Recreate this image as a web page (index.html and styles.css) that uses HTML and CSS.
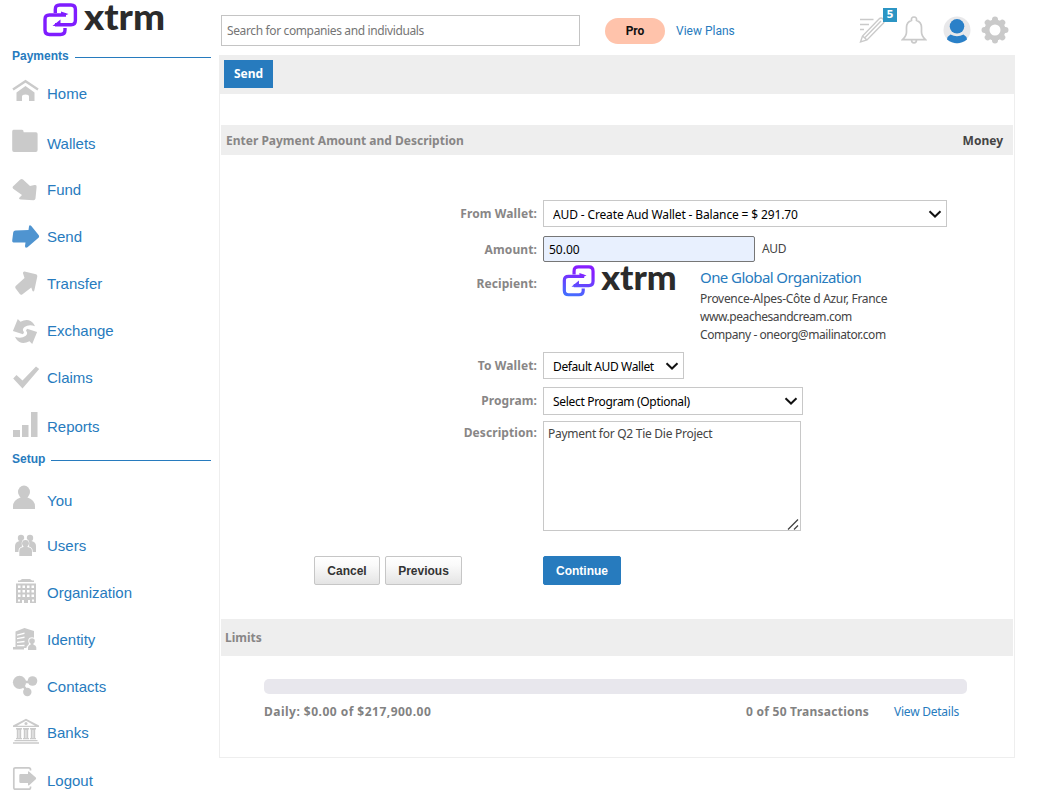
FILE: index.html
```html
<!DOCTYPE html>
<html lang="en">
<head>
    <meta charset="UTF-8">
    <title>XTRM - Send Payment</title>
    <link rel="stylesheet" href="styles.css">
</head>
<body>
    <div class="page">
        <aside class="sidebar">
            <a class="logo" href="#">
                <svg width="124" height="36" viewBox="0 0 124 36">
                    <g class="logo-mark" stroke="#7f1dff">
                        <path d="M12.3 10V6.5Q12.3 2 16.8 2H28Q32.4 2 32.4 6.5V17.3Q32.4 21.8 28 21.8H12"/>
                        <path d="M23 12H6.5Q2 12 2 16.5V27Q2 31.5 6.5 31.5H17.5Q22 31.5 22 27V25"/>
                    </g>
                    <path fill="#7f1dff" d="M9.5 23L17.5 16.5V23ZM25.5 11L18 8.5V13H21Z"/>
                    <text class="logo-text" x="41" y="26.5" textLength="81" lengthAdjust="spacingAndGlyphs">xtrm</text>
                </svg>
            </a>

            <div class="menu-title">Payments</div>
            <ul class="menu">
                <li>
                    <svg viewBox="0 0 28 34"><path class="line" stroke-width="2.4" d="M1 12.5L13.5 4.2L26 12.5"/><path d="M4.5 15.5L13.5 9L22.5 15.5V24H17V19.5Q17 17.5 13.5 17.5Q10 17.5 10 19.5V24H4.5Z"/></svg>
                    <a href="#">Home</a>
                </li>
                <li class="down-3">
                    <svg viewBox="0 0 28 34"><path d="M1.5 2.8H10Q11.5 2.8 11.7 5.2H24Q25.6 5.2 25.6 7V23Q25.6 25 23.8 25H2Q.2 25 .2 23V4.5Q.2 2.8 1.5 2.8Z"/></svg>
                    <a href="#">Wallets</a>
                </li>
                <li class="up-1">
                    <svg viewBox="0 0 28 34"><path d="M.9 13.5L8 6.8Q9.5 5.5 11 6.5L18 13L22.5 12Q25 11.5 24.6 14L23.5 25.5Q23.2 27.2 21.5 27.2L9 26.6Q6 26.2 7.5 24.5L10 22L1.2 15.7Q0 14.5 .9 13.5Z"/></svg>
                    <a href="#">Fund</a>
                </li>
                <li>
                    <svg class="active" viewBox="0 0 28 34"><path d="M3.5 10.6L16.5 10L17 6.5Q17.5 4.5 19.3 6L26.8 15.3Q27.5 16.5 26.8 17.5L15.5 27.2Q13 28.5 13 26L13.5 22.6H1.5Q0 22.5 .2 20.5L1.2 12.5Q1.5 10.7 3.5 10.6Z"/></svg>
                    <a href="#">Send</a>
                </li>
                <li>
                    <svg viewBox="0 0 28 34"><path d="M12.5 4.6L24 7.3Q25.5 7.8 25.3 9.5L22.3 23.5Q21.5 25 20.5 24L19.3 20.5L10.5 27.2Q9 28.3 7.8 27L3.5 21.2Q2.8 20 3.7 19L12.5 11L11 6.2Q10.8 4.5 12.5 4.6Z"/></svg>
                    <a href="#">Transfer</a>
                </li>
                <li>
                    <svg viewBox="0 0 28 34"><path d="M.9 17L5.8 5L8.5 7.7Q17 3.5 21.8 10L23 12.3Q17 10 12.5 13Q9.5 15.5 12 18.2L11 20.3Z"/><path transform="rotate(180 13 17.5)" d="M.9 17L5.8 5L8.5 7.7Q17 3.5 21.8 10L23 12.3Q17 10 12.5 13Q9.5 15.5 12 18.2L11 20.3Z"/></svg>
                    <a href="#">Exchange</a>
                </li>
                <li>
                    <svg viewBox="0 0 28 34"><path d="M1.2 17.5L4.5 14L10.5 19.5L24 5.5L27.2 8L10.5 27.5Z"/></svg>
                    <a href="#">Claims</a>
                </li>
                <li class="down-2">
                    <svg viewBox="0 0 28 34"><path d="M1 20H8V27H1ZM10 15H16.5V27H10ZM19 2H25.5V27H19Z"/></svg>
                    <a href="#">Reports</a>
                </li>
            </ul>

            <div class="menu-title setup">Setup</div>
            <ul class="menu">
                <li>
                    <svg viewBox="0 0 28 34"><ellipse cx="12" cy="8" rx="6" ry="6.5"/><path d="M8.5 11H15.5V13.5Q23 16 23 22.5V25H1V22.5Q1 16 8.5 13.5Z"/></svg>
                    <a href="#">You</a>
                </li>
                <li class="up-2">
                    <svg viewBox="0 0 28 34"><circle cx="9" cy="9" r="3.2"/><circle cx="18" cy="9" r="3.2"/><path d="M3 23V17Q3 13 7.5 12H19.5Q24 13 24 17V23Z"/><path class="cut" d="M6.5 27.5V22Q6.500 18.500 10 17.500Q8.500 10 13.500 10Q18.500 10 17 17.500Q20.700 18.500 20.700 22V27.500Z"/><circle cx="13.5" cy="14.3" r="3.4"/><path d="M7.3 27V22Q7.300 18.500 11.500 18V16H15.500V18Q20 18.500 20 22V27Z"/></svg>
                    <a href="#">Users</a>
                </li>
                <li>
                    <svg viewBox="0 0 28 34"><path d="M10 3H18L20 4.5H22V6H6V4.5H8ZM4 7.5H24V27H18V24H16V27H12V24H10V27H4Z"/><path class="cut" d="M6 9.5h2.500v2.500h-2.500zM10.500 9.500h2.500v2.500h-2.500zM15 9.500h2.500v2.500h-2.500zM19.500 9.500h2.500v2.500h-2.500zM6 14h2.500v2.500h-2.500zM10.500 14h2.500v2.500h-2.500zM15 14h2.500v2.500h-2.500zM19.500 14h2.500v2.500h-2.500zM6 18.500h2.500v2.500h-2.500zM10.500 18.500h2.500v2.500h-2.500zM15 18.500h2.500v2.500h-2.500zM19.500 18.500h2.500v2.500h-2.500zM6 23.500h2v2h-2zM20 23.500h2v2h-2z"/></svg>
                    <a href="#">Organization</a>
                </li>
                <li>
                    <svg viewBox="0 0 28 34"><path d="M3.5 8.5L12.5 5L22 8V25H12V26.5H1V24H3.5Z"/><path class="cut" d="M5 11.5L12.5 9.5V11L5 12.7ZM5 15L12.5 13.5V15L5 16.3ZM5 18.7L12.5 17.7V19.3L5 20ZM5 22.3L12.5 21.7V23.3H5Z"/><path class="cut" d="M14.5 28V24Q16 22 17 21Q14.5 14.5 20 14.2Q25 14.5 23 21Q25 22 25 28Z"/><circle cx="20" cy="18" r="2.8"/><path d="M18.7 19H21.3V21.5Q24.3 22.5 24.3 24.5V27H16V24.5Q16 22.5 18.7 21.5Z"/></svg>
                    <a href="#">Identity</a>
                </li>
                <li>
                    <svg viewBox="0 0 28 34"><circle cx="7.5" cy="12.3" r="6.6"/><circle cx="20.5" cy="11" r="4.8"/><circle cx="15.3" cy="22" r="4.2"/><path class="line" stroke-width="2.5" d="M8 12H20M10 14L15 21"/></svg>
                    <a href="#">Contacts</a>
                </li>
                <li class="up-1">
                    <svg viewBox="0 0 28 34"><path fill-rule="evenodd" d="M14 2.8L27 9.5V11H1V9.5ZM14 4.8L5 9.7H23Z"/><circle cx="14" cy="7.5" r="1.5"/><path d="M4 12h6v1.5H4zM11 12h6v1.5h-6zM18 12h6v1.5h-6zM4.8 13h4.400v9H4.800zM11.800 13h4.400v9h-4.400zM18.800 13h4.400v9h-4.400zM4 22h6v1.300H4zM11 22h6v1.300h-6zM18 22h6v1.300h-6zM2.500 24h23v1.300h-23zM1 26.300h26v1.500H1z"/><path class="cut" d="M6.600 14h.7v8h-.7zM13.600 14h.7v8h-.7zM20.600 14h.7v8h-.7z"/></svg>
                    <a href="#">Banks</a>
                </li>
                <li class="down-1">
                    <svg viewBox="0 0 28 34"><path class="line" stroke-width="1.7" d="M18.5 6.5V5.5Q18.5 3.8 16.8 3.8H3.5Q1.8 3.8 1.8 5.5V23.5Q1.8 25.2 3.5 25.2H16.8Q18.5 25.2 18.5 23.5V22.5"/><path d="M8.5 10H16V8Q16 6.8 17.2 7.7L23.8 13.5Q24.5 14.3 23.8 15.2L17.2 21.2Q16 22 16 20.8V19H8.5Q7.3 19 7.3 17.8V11.2Q7.3 10 8.5 10Z"/></svg>
                    <a href="#">Logout</a>
                </li>
            </ul>
        </aside>

        <main class="main">
            <header class="header">
                <input class="search" type="text" placeholder="Search for companies and individuals">
                <span class="plan">Pro</span>
                <a class="view-plans" href="#">View Plans</a>
                <div class="tools">
                    <a class="tasks" href="#">
                        <svg width="28" height="28" viewBox="0 0 28 28"><path class="line" stroke-width="1.4" d="M1 3.5H14.500M1 8.500H10M1 13.500H5"/><path class="line" stroke-width="1.400" d="M1.500 26L3.500 20L20 3Q22 1 24 3Q26 5 24.500 7L8 24ZM3.500 20L8 24M5.500 22L22 5"/></svg>
                        <span class="badge">5</span>
                    </a>
                    <svg class="bell" width="26" height="28" viewBox="0 0 26 28"><path class="line" stroke-width="1.7" d="M10.5 4.5Q10 1 13 1Q16 1 15.5 4.5Q20.5 6 20.5 11.5V16Q20.5 20 24.5 23.7H1.5Q5.5 20 5.5 16V11.5Q5.5 6 10.5 4.5ZM10.5 24Q10.5 26.8 13 26.8Q15.5 26.8 15.5 24"/></svg>
                    <svg class="avatar" width="28" height="28" viewBox="0 0 28 28"><circle cx="14" cy="14" r="13.5" fill="#e8e8ea"/><circle cx="14" cy="10.3" r="7.3" fill="#2a80c8"/><path fill="#2a80c8" d="M4 23.5Q4.5 20 7.5 18.5Q14 22 20.5 18.5Q23.5 20 24 23.5Q14 31 4 23.5Z"/></svg>
                    <svg class="gear" width="28" height="28" viewBox="0 0 28 28"><circle class="line" cx="14" cy="14" r="8" stroke-width="5"/><path class="line" stroke-width="6" stroke-linecap="round" d="M14 3.5V5M14 23V24.5M3.5 14H5M23 14H24.5M6.7 6.7L7.5 7.5M20.5 20.5L21.3 21.3M6.7 21.3L7.5 20.5M20.5 7.5L21.3 6.7"/></svg>
                </div>
            </header>

            <div class="panel">
                <div class="toolbar"><a class="tab" href="#">Send</a></div>

                <div class="section-title">
                    <span>Enter Payment Amount and Description</span>
                    <span class="money">Money</span>
                </div>

                <form class="form">
                    <div class="row row-from">
                        <label>From Wallet:</label>
                        <div class="select from-wallet">
                            <select><option>AUD - Create Aud Wallet - Balance = $ 291.70</option></select>
                            <svg class="chevron" viewBox="0 0 14 8"><path d="M1.5 1.3L7 6.5L12.5 1.3"/></svg>
                        </div>
                    </div>
                    <div class="row row-amount">
                        <label>Amount:</label>
                        <input class="amount" type="text" value="50.00">
                        <span class="currency">AUD</span>
                    </div>
                    <div class="row row-recipient">
                        <label>Recipient:</label>
                        <div class="recipient">
                            <svg class="recipient-logo" width="120" height="34" viewBox="0 0 124 36">
                                <defs>
                                    <linearGradient id="mark" gradientUnits="userSpaceOnUse" x1="20" y1="0" x2="12" y2="34">
                                        <stop offset="0.2" stop-color="#861fff"/>
                                        <stop offset="1" stop-color="#4270ff"/>
                                    </linearGradient>
                                </defs>
                                <g class="logo-mark" stroke="url(#mark)">
                                    <path d="M12.3 10V6.5Q12.3 2 16.8 2H28Q32.4 2 32.4 6.5V17.3Q32.4 21.8 28 21.8H12"/>
                                    <path d="M23 12H6.5Q2 12 2 16.5V27Q2 31.5 6.5 31.5H17.5Q22 31.5 22 27V25"/>
                                </g>
                                <path fill="url(#mark)" d="M9.5 23L17.5 16.5V23ZM25.5 11L18 8.5V13H21Z"/>
                                <text class="logo-text" x="41" y="26.5" textLength="80" lengthAdjust="spacingAndGlyphs">xtrm</text>
                            </svg>
                            <div class="details">
                                <a href="#">One Global Organization</a>
                                <p>Provence-Alpes-Côte d Azur, France</p>
                                <p class="site">www.peachesandcream.com</p>
                                <p class="mail">Company - oneorg@mailinator.com</p>
                            </div>
                        </div>
                    </div>
                    <div class="row row-to">
                        <label>To Wallet:</label>
                        <div class="select to-wallet">
                            <select><option>Default AUD Wallet</option></select>
                            <svg class="chevron" viewBox="0 0 14 8"><path d="M1.5 1.3L7 6.5L12.5 1.3"/></svg>
                        </div>
                    </div>
                    <div class="row row-program">
                        <label>Program:</label>
                        <div class="select program">
                            <select><option>Select Program (Optional)</option></select>
                            <svg class="chevron" viewBox="0 0 14 8"><path d="M1.5 1.3L7 6.5L12.5 1.3"/></svg>
                        </div>
                    </div>
                    <div class="row row-description">
                        <label>Description:</label>
                        <div class="description">
                            <textarea>Payment for Q2 Tie Die Project</textarea>
                            <svg class="grip" viewBox="0 0 12 12"><path d="M1 11.5L11 1.5M7 11.5L11 7.5"/></svg>
                        </div>
                    </div>
                    <div class="buttons">
                        <button type="button" class="btn cancel">Cancel</button>
                        <button type="button" class="btn previous">Previous</button>
                        <button type="button" class="btn continue">Continue</button>
                    </div>
                </form>

                <div class="section-title limits-title">Limits</div>
                <div class="limits">
                    <div class="progress"></div>
                    <div class="limits-info">
                        <span class="daily">Daily: $0.00 of $217,900.00</span>
                        <span class="count">0 of 50 Transactions</span>
                        <a href="#">View Details</a>
                    </div>
                </div>
            </div>
        </main>
    </div>
</body>
</html>
```
FILE: styles.css
```css
:root {
    --blue: #277bbe;
    --grey: #eeeeee;
    --icon: #cacaca;
    --label: #888686;
}

* {
    box-sizing: border-box;
}

body {
    margin: 0;
    background: #fff;
    color: #444;
    font-family: Tahoma, "Noto Sans", sans-serif;
    font-size: 12px;
}

a {
    color: var(--blue);
    text-decoration: none;
}

.page {
    display: flex;
    height: 811px;
}

/* sidebar */
.sidebar {
    width: 219px;
    padding: 3px 8px 0 12px;
    flex-shrink: 0;
    font-family: Arial, "Liberation Sans", sans-serif;
}

.logo {
    display: block;
    height: 46px;
    margin-left: 31px;
}

.logo svg,
.recipient-logo {
    overflow: visible;
}

.logo-mark {
    fill: none;
    stroke-width: 3.4;
}

.logo-text {
    font: 900 36px Lato, sans-serif;
    fill: #2b2b2b;
}

.menu-title {
    display: flex;
    align-items: center;
    gap: 6px;
    height: 14px;
    color: var(--blue);
    font-weight: bold;
}

.menu-title::after {
    content: '';
    flex: 1;
    height: 1px;
    margin-top: 3px;
    background: var(--blue);
}

.menu {
    list-style: none;
    margin: 7px 0 0;
    padding: 0;
}

.menu li {
    display: flex;
    align-items: center;
    height: 47px;
    gap: 7px;
    font-size: 15px;
}

.menu svg {
    width: 28px;
    height: 34px;
    margin-top: 1px;
    fill: var(--icon);
}

.menu svg.active {
    fill: #4f94d0;
}

.menu .cut {
    fill: #fff;
}

.menu .down-3 { margin-top: 3px; }
.menu .down-2 { margin-top: 2px; }
.menu .down-1 { margin-top: 1px; }
.menu .up-1 { margin-top: -1px; }
.menu .up-2 { margin-top: -2px; }

.setup {
    margin-top: 2px;
}

.setup + .menu {
    margin-top: 11px;
}

.line {
    fill: none;
    stroke: var(--icon);
}

/* top bar */
.main {
    width: 796px;
}

.header {
    display: flex;
    align-items: center;
    height: 55px;
    padding: 6px 0 0 2px;
}

.search {
    width: 359px;
    height: 31px;
    padding: 0 5px;
    border: 1px solid #c4c4c4;
    font: inherit;
    letter-spacing: -0.37px;
}

.search::placeholder {
    color: #757575;
}

.plan {
    width: 60px;
    margin-left: 25px;
    border-radius: 13px;
    background: #ffc3ab;
    color: #111;
    font: bold 12px/26px Roboto, sans-serif;
    text-align: center;
}

.view-plans {
    margin-left: 11px;
    font-family: Roboto, sans-serif;
}

.tools {
    display: flex;
    margin: -1px 0 0 auto;
    padding-right: 6px;
}

.tools svg {
    display: block;
}

.tasks {
    position: relative;
}

.badge {
    position: absolute;
    left: 24px;
    top: -8px;
    width: 14px;
    background: #2c95c4;
    color: #fff;
    font: bold 10px/14px "DejaVu Sans", sans-serif;
    text-align: center;
}

.bell {
    margin-left: 14px;
}

.avatar {
    margin-left: 16px;
}

.gear {
    margin-left: 10px;
}

/* panel */
.panel {
    height: 703px;
    border: 1px solid var(--grey);
    border-top: 0;
}

.toolbar {
    height: 39px;
    padding: 5px 4px;
    background: var(--grey);
}

.tab {
    display: block;
    width: 49px;
    background: var(--blue);
    color: #fff;
    font: bold 12px/28px "Noto Sans", sans-serif;
    text-align: center;
}

.section-title {
    display: flex;
    justify-content: space-between;
    align-items: center;
    height: 30px;
    margin: 31px 1px 0;
    padding: 0 10px 0 5px;
    background: var(--grey);
    color: var(--label);
    font-weight: bold;
}

.money {
    color: #444;
}

.form {
    height: 464px;
    padding-top: 45px;
}

.row {
    display: flex;
    align-items: flex-start;
}

.row label {
    width: 317px;
    margin-right: 6px;
    color: var(--label);
    font-weight: bold;
    letter-spacing: 0.1px;
    line-height: 27px;
    text-align: right;
}

.row-from { height: 36px; }
.row-amount { height: 29px; }
.row-recipient { height: 87px; }
.row-to { height: 35px; }
.row-program { height: 34px; }
.row-description { height: 135px; }

.select {
    position: relative;
    height: 27px;
}

.select select {
    width: 100%;
    height: 100%;
    padding: 1px 9px 0;
    border: 1px solid #c8c8c8;
    border-radius: 0;
    background: #fff;
    color: #000;
    font: inherit;
    letter-spacing: inherit;
    appearance: none;
}

.from-wallet {
    width: 404px;
    letter-spacing: -0.14px;
}

.to-wallet {
    width: 141px;
    letter-spacing: -0.38px;
}

.program {
    width: 260px;
    height: 28px;
    letter-spacing: -0.32px;
}

.chevron {
    position: absolute;
    right: 5px;
    top: 10px;
    width: 14px;
    height: 8px;
    fill: none;
    stroke: #111;
    stroke-width: 2;
}

.amount {
    width: 212px;
    height: 26px;
    padding: 1px 5px 0;
    border: 1px solid #767676;
    border-radius: 2px;
    background: #e8f0fe;
    color: #000;
    font: inherit;
}

.currency {
    margin-left: 7px;
    line-height: 26px;
    letter-spacing: -0.4px;
}

.row-recipient label {
    padding-top: 5px;
}

.recipient {
    display: flex;
    padding-left: 18px;
}

.details {
    padding: 2px 0 0 19px;
    letter-spacing: -0.43px;
}

.details a {
    display: block;
    margin-bottom: 3px;
    font-size: 15px;
    letter-spacing: -0.57px;
    line-height: 20px;
}

.details p {
    margin: 0;
    line-height: 18px;
}

.details a + p {
    letter-spacing: -0.3px;
}

.row-description label {
    line-height: 24px;
}

.description {
    position: relative;
    width: 258px;
    height: 110px;
}

.description textarea {
    display: block;
    width: 100%;
    height: 100%;
    padding: 3px 4px;
    border: 1px solid #c8c8c8;
    color: #444;
    font: inherit;
    letter-spacing: -0.27px;
    resize: none;
}

.grip {
    position: absolute;
    right: 2px;
    bottom: 1px;
    width: 12px;
    height: 12px;
    stroke: #444;
    stroke-width: 1.3;
}

.buttons {
    display: flex;
    gap: 5px;
    padding-left: 94px;
}

.btn {
    height: 29px;
    padding: 0;
    border: 1px solid #c6c6c6;
    border-radius: 2px;
    background: linear-gradient(#fff, #fafafa 30%, #e4e4e4);
    color: #333;
    font: bold 12px Arial, "Liberation Sans", sans-serif;
}

.cancel { width: 66px; }
.previous { width: 77px; }

.continue {
    width: 78px;
    margin-left: 76px;
    border-color: var(--blue);
    background: var(--blue);
    color: #fff;
}

/* limits */
.limits-title {
    height: 37px;
    margin-top: 0;
    padding-left: 4px;
}

.limits {
    width: 703px;
    margin: 23px 0 0 44px;
}

.progress {
    height: 15px;
    border-radius: 5px;
    background: #e8e7ed;
}

.limits-info {
    display: flex;
    margin-top: 9px;
    padding-right: 8px;
    color: #828282;
    font-weight: bold;
}

.limits-info a {
    margin-left: 25px;
    font-weight: normal;
    letter-spacing: -0.25px;
}

.daily {
    letter-spacing: 0.48px;
}

.count {
    margin-left: auto;
    letter-spacing: 0.25px;
}
```
